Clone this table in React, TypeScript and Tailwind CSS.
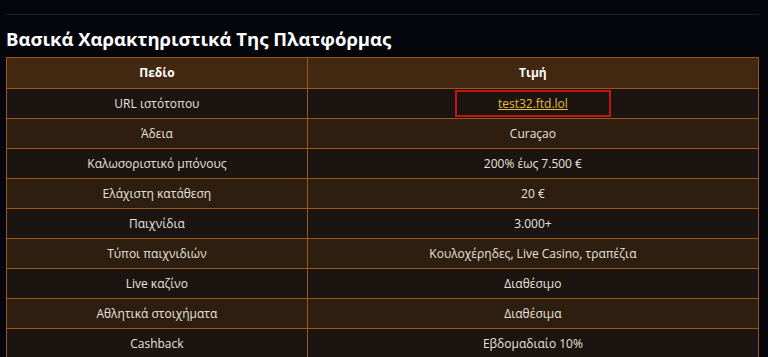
const rows: [string, string][] = [
  ["URL ιστότοπου", "test32.ftd.lol"],
  ["Άδεια", "Curaçao"],
  ["Καλωσοριστικό μπόνους", "200% έως 7.500 €"],
  ["Ελάχιστη κατάθεση", "20 €"],
  ["Παιχνίδια", "3.000+"],
  ["Τύποι παιχνιδιών", "Κουλοχέρηδες, Live Casino, τραπέζια"],
  ["Live καζίνο", "Διαθέσιμο"],
  ["Αθλητικά στοιχήματα", "Διαθέσιμα"],
  ["Cashback", "Εβδομαδιαίο 10%"],
];

export default function App() {
  return (
    <div className="min-h-screen bg-[#05060b] pl-[6px] pr-[9px] pt-[14px] font-['Open_Sans',sans-serif]">
      <div className="h-px bg-[#1c1e27]" />

      <h2 className="mt-[11px] mb-[5px] text-[18.5px] leading-[26px] font-bold text-white">
        Βασικά Χαρακτηριστικά Της Πλατφόρμας
      </h2>

      <table className="w-full border-collapse text-[12px] text-[#e6e3df]">
        <thead>
          <tr className="bg-[#432811]">
            <th className="w-[40%] h-[31px] border border-[#9a5716] text-white font-bold">Πεδίο</th>
            <th className="h-[31px] border border-[#9a5716] text-white font-bold">Τιμή</th>
          </tr>
        </thead>
        <tbody>
          {rows.map(([field, value], i) => (
            <tr key={field} className={i % 2 === 0 ? "bg-[#1c1410]" : "bg-[#2e1e10]"}>
              <td className="h-[30px] border border-[#9a5716] text-center">{field}</td>
              <td className="h-[30px] border border-[#9a5716] text-center">
                {i === 0 ? (
                  <span className="inline-flex h-[27px] w-[156px] items-center justify-center border-2 border-[#c41414]">
                    <a href="#" className="text-[#e6bf3a] underline">{value}</a>
                  </span>
                ) : (
                  value
                )}
              </td>
            </tr>
          ))}
        </tbody>
      </table>
    </div>
  );
}
